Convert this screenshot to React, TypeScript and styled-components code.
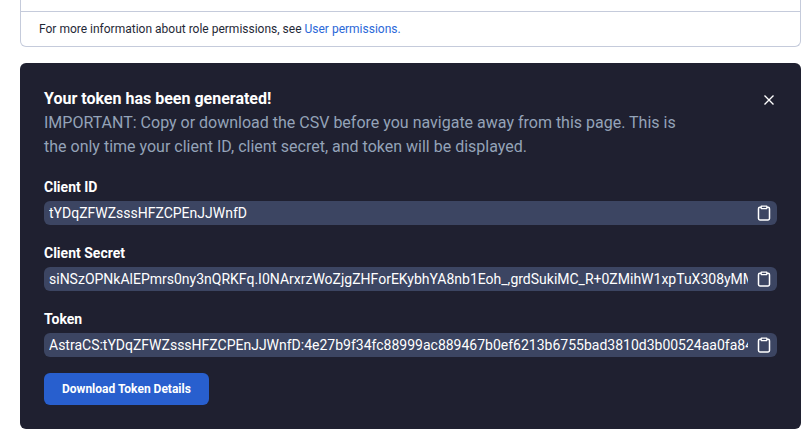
import React, { useId } from 'react';
import styled, { createGlobalStyle } from 'styled-components';

const GlobalStyle = createGlobalStyle`
  *, *::before, *::after { box-sizing: border-box; }
  body {
    margin: 0;
    background: #ffffff;
    color: #1f2937;
    font-family: Roboto, "Liberation Sans", sans-serif;
  }
`;

const Page = styled.main`
  display: flex;
  flex-direction: column;
  gap: 16px;
  padding: 0 10px 4px 20px;
`;

const RolesCard = styled.section`
  border: 1px solid #c5cbdb;
  border-top: 0;
  border-radius: 0 0 6px 6px;
  padding-top: 11px;
`;

const RolesNote = styled.p`
  margin: 0;
  padding: 8px 18px;
  border-top: 1px solid #c5cbdb;
  font-size: 12px;
  line-height: 18px;
`;

const DocLink = styled.a`
  color: #2b68d8;
  text-decoration: none;
`;

const TokenPanel = styled.section`
  padding: 24px;
  border-radius: 6px;
  background: #1f2030;
  color: #ffffff;
`;

const PanelHeader = styled.header`
  display: flex;
  justify-content: space-between;
  align-items: flex-start;
  gap: 16px;
`;

const Message = styled.div`
  max-width: 650px;
  font-size: 16px;
  line-height: 24px;
`;

const Title = styled.h2`
  margin: 0;
  font-size: inherit;
  font-weight: 700;
`;

const Warning = styled.p`
  margin: 0;
  color: #94a3b8;
`;

const IconButton = styled.button`
  display: flex;
  flex: none;
  align-items: center;
  justify-content: center;
  padding: 0;
  border: 0;
  background: transparent;
  color: #ffffff;
  cursor: pointer;
`;

const CloseButton = styled(IconButton)`
  width: 16px;
  height: 26px;
`;

const CopyButton = styled(IconButton)`
  width: 16px;
  height: 24px;
`;

const Field = styled.div`
  display: flex;
  flex-direction: column;
  gap: 4px;
  margin-top: 18px;
`;

const FieldLabel = styled.label`
  font-size: 14px;
  font-weight: 700;
  line-height: 20px;
`;

const FieldBox = styled.div`
  display: flex;
  align-items: center;
  gap: 8px;
  padding: 0 5px;
  border-radius: 6px;
  background: #3c4562;
`;

const FieldValue = styled.input`
  flex: 1;
  min-width: 0;
  height: 24px;
  padding: 0;
  border: 0;
  outline: 0;
  background: transparent;
  color: #ffffff;
  font: 400 14px/24px Roboto, "Liberation Sans", sans-serif;
`;

const DownloadButton = styled.button`
  height: 32px;
  margin-top: 16px;
  padding: 0 18px;
  border: 0;
  border-radius: 6px;
  background: #285fce;
  color: #ffffff;
  font: 700 12px/16px Roboto, "Liberation Sans", sans-serif;
  cursor: pointer;
`;

const CloseIcon = () => (
  <svg width="16" height="16" viewBox="0 0 16 16" fill="none" stroke="currentColor" strokeWidth="1.4" aria-hidden="true">
    <path d="M3.5 3.5l9 9M12.5 3.5l-9 9" />
  </svg>
);

const ClipboardIcon = () => (
  <svg width="16" height="18" viewBox="0 0 16 18" fill="none" stroke="currentColor" strokeWidth="1.5" strokeLinejoin="round" aria-hidden="true">
    <path d="M5 3.3H3.9Q2.5 3.3 2.5 4.7V14.6Q2.5 16 3.9 16H12.1Q13.5 16 13.5 14.6V4.7Q13.5 3.3 12.1 3.3H11" />
    <path d="M5.2 2.2H10.8V4.6H5.2Z" strokeWidth="1.3" />
  </svg>
);

const credentials = [
  { label: 'Client ID', value: 'tYDqZFWZsssHFZCPEnJJWnfD' },
  {
    label: 'Client Secret',
    value: 'siNSzOPNkAlEPmrs0ny3nQRKFq.I0NArxrzWoZjgZHForEKybhYA8nb1Eoh_,grdSukiMC_R+0ZMihW1xpTuX308yMM',
  },
  {
    label: 'Token',
    value: 'AstraCS:tYDqZFWZsssHFZCPEnJJWnfD:4e27b9f34fc88999ac889467b0ef6213b6755bad3810d3b00524aa0fa84',
  },
];

function Credential({ label, value }: { label: string; value: string }) {
  const id = useId();
  return (
    <Field>
      <FieldLabel htmlFor={id}>{label}</FieldLabel>
      <FieldBox>
        <FieldValue id={id} type="text" readOnly value={value} />
        <CopyButton type="button" aria-label={`Copy ${label}`} onClick={() => navigator.clipboard?.writeText(value)}>
          <ClipboardIcon />
        </CopyButton>
      </FieldBox>
    </Field>
  );
}

export default function App() {
  return (
    <>
      <GlobalStyle />
      <Page>
        <RolesCard>
          <RolesNote>
            For more information about role permissions, see <DocLink href="#user-permissions">User permissions.</DocLink>
          </RolesNote>
        </RolesCard>
        <TokenPanel>
          <PanelHeader>
            <Message>
              <Title>Your token has been generated!</Title>
              <Warning>
                IMPORTANT: Copy or download the CSV before you navigate away from this page. This is the only time your
                client ID, client secret, and token will be displayed.
              </Warning>
            </Message>
            <CloseButton type="button" aria-label="Close">
              <CloseIcon />
            </CloseButton>
          </PanelHeader>
          {credentials.map((item) => (
            <Credential key={item.label} {...item} />
          ))}
          <DownloadButton type="button">Download Token Details</DownloadButton>
        </TokenPanel>
      </Page>
    </>
  );
}
